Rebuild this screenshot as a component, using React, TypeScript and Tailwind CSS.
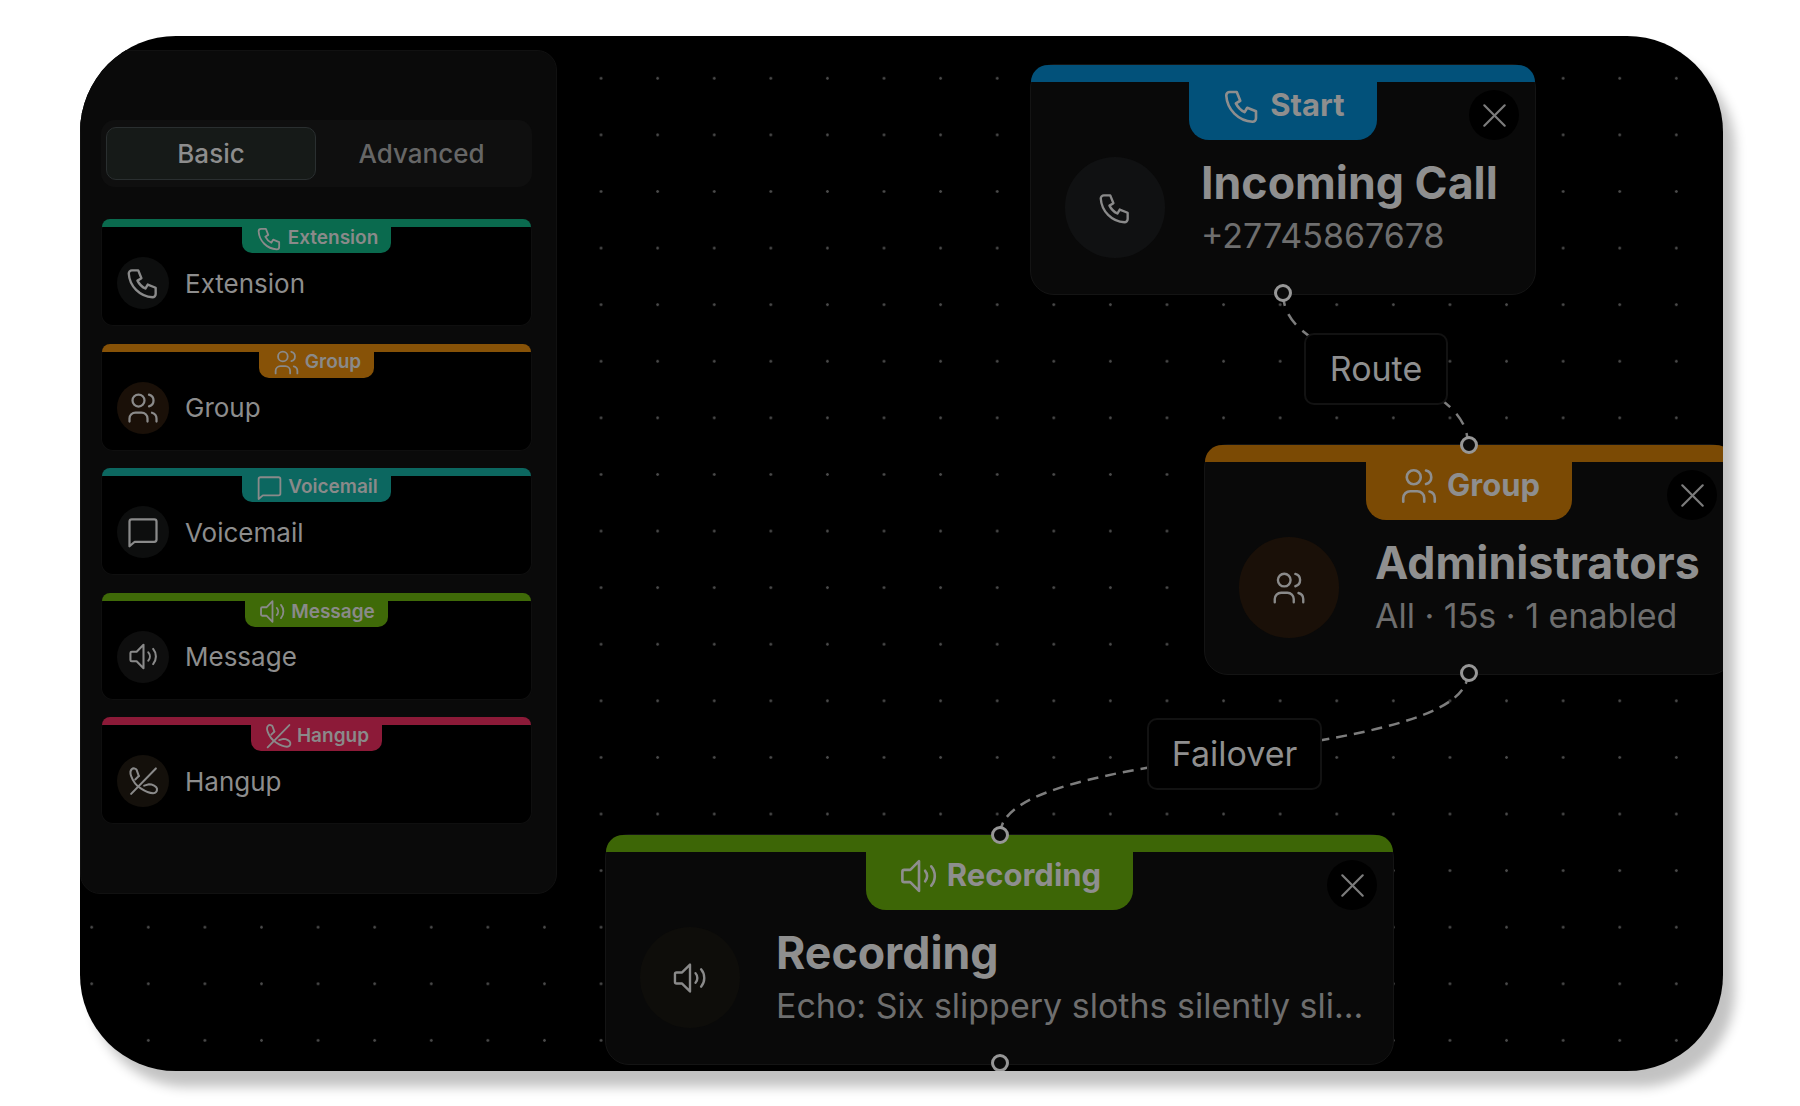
import React from 'react';

type IconProps = { size: number; className?: string };

const Svg = ({ size, className, children }: IconProps & { children: React.ReactNode }) => (
  <svg
    width={size}
    height={size}
    viewBox="0 0 24 24"
    fill="none"
    stroke="currentColor"
    strokeWidth={1.5}
    strokeLinecap="round"
    strokeLinejoin="round"
    className={`shrink-0 overflow-visible ${className ?? ''}`}
  >
    {children}
  </svg>
);

const PhoneIcon = (p: IconProps) => (
  <Svg {...p}>
    <path d="M5 4h4l2 5l-2.5 1.5a11 11 0 0 0 5 5l1.5 -2.5l5 2v4a2 2 0 0 1 -2 2a16 16 0 0 1 -15 -15a2 2 0 0 1 2 -2" />
  </Svg>
);

const UsersIcon = (p: IconProps) => (
  <Svg {...p}>
    <path d="M9 7m-4 0a4 4 0 1 0 8 0a4 4 0 1 0 -8 0" />
    <path d="M3 21v-2a4 4 0 0 1 4 -4h4a4 4 0 0 1 4 4v2" />
    <path d="M16 3.13a4 4 0 0 1 0 7.75" />
    <path d="M21 21v-2a4 4 0 0 0 -3 -3.85" />
  </Svg>
);

const MessageIcon = (p: IconProps) => (
  <Svg {...p}>
    <path d="M3 5a1.5 1.5 0 0 1 1.5 -1.5h15a1.5 1.5 0 0 1 1.5 1.5v12a1.5 1.5 0 0 1 -1.5 1.5h-13l-3.5 3z" />
  </Svg>
);

const SpeakerIcon = (p: IconProps) => (
  <Svg {...p}>
    <path d="M3.5 8.5h3.5l5 -5v17l-5 -5h-3.5a1 1 0 0 1 -1 -1v-5a1 1 0 0 1 1 -1z" />
    <path d="M15.5 9a4.5 4.5 0 0 1 0 6" />
    <path d="M19 6.5a8.5 8.5 0 0 1 0 11" />
  </Svg>
);

const HangupIcon = (p: IconProps) => (
  <Svg {...p}>
    <path d="M21 2.5L3 21" />
    <path d="M8.6 8L7 3.5C6.5 2.5 4.5 2 3.5 3C2.2 4.2 2.3 6 3 8C4.2 11.5 6.8 15 10 17C13 19 16.5 20.5 19 20.5C21 20.5 22 19.2 21.8 17.2C21.6 15.6 18.5 14 16 14L12.5 15" />
    <path d="M8.6 8L6 10.5" />
  </Svg>
);

const XIcon = (p: IconProps) => (
  <Svg {...p}>
    <path d="M5 5L19 19" />
    <path d="M19 5L5 19" />
  </Svg>
);

const items = [
  { label: 'Extension', Icon: PhoneIcon, bar: 'bg-[#0a6a4e]', avatar: 'bg-[#0d0e0e]', iconSize: 38 },
  { label: 'Group', Icon: UsersIcon, bar: 'bg-[#875207]', avatar: 'bg-[#1a1008]', iconSize: 36 },
  { label: 'Voicemail', Icon: MessageIcon, bar: 'bg-[#0c6760]', avatar: 'bg-[#0d0e0e]', iconSize: 36 },
  { label: 'Message', Icon: SpeakerIcon, bar: 'bg-[#3f6a08]', avatar: 'bg-[#0e0e0e]', iconSize: 33 },
  { label: 'Hangup', Icon: HangupIcon, bar: 'bg-[#8c1a38]', avatar: 'bg-[#14100b]', iconSize: 33 },
];

const Sidebar = () => (
  <aside className="ml-0 mt-[14px] h-[844px] w-[477px] rounded-[20px] border border-[#111111] bg-[#0a0a0a] pl-[20px] pr-[24px] pt-[69px]">
    <div className="flex h-[67px] items-center rounded-[14px] bg-[#0f0f0f] px-[5px]">
      <div className="flex h-[53px] w-[210px] items-center justify-center rounded-[10px] border border-[#2a2f30] bg-[#161a18] text-[26px] font-medium text-[#8d8d8d]">
        Basic
      </div>
      <div className="flex h-[53px] flex-1 items-center justify-center text-[26px] font-medium text-[#666666]">
        Advanced
      </div>
    </div>
    <div className="mt-[32px] flex flex-col gap-[17.6px]">
      {items.map(({ label, Icon, bar, avatar, iconSize }) => (
        <div key={label} className="h-[107px] rounded-[12px] border-x border-b border-[#0f0f0f] bg-black">
          <div className={`h-[8px] rounded-t-[8px] ${bar}`} />
          <div className={`mx-auto -mt-[4px] flex h-[30px] w-fit items-center gap-[4px] rounded-b-[10px] px-[13px] text-[19px] font-semibold text-[#8a8a8a] ${bar}`}>
            <Icon size={29} />
            {label}
          </div>
          <div className="mt-[4px] flex items-center gap-[16px] pl-[15px]">
            <div className={`flex h-[52px] w-[52px] items-center justify-center rounded-full text-[#8a8a8a] ${avatar}`}>
              <Icon size={iconSize} />
            </div>
            <span className="text-[26px] text-[#8d8d8d]">{label}</span>
          </div>
        </div>
      ))}
    </div>
  </aside>
);

type FlowNodeProps = {
  className: string;
  Icon: (p: IconProps) => React.ReactElement;
  badge: string;
  title: string;
  subtitle: string;
  color: string;
  avatar: string;
  topHandle?: boolean;
};

const Handle = ({ className }: { className: string }) => (
  <div className={`absolute left-1/2 h-[18px] w-[18px] -translate-x-1/2 rounded-full border-[3px] border-[#979797] bg-[#0a0a0a] ${className}`} />
);

const FlowNode = ({ className, Icon, badge, title, subtitle, color, avatar, topHandle }: FlowNodeProps) => (
  <div className={`absolute h-[231px] rounded-[24px] border border-[#141414] bg-[#090909] ${className}`}>
    <div className={`h-[17px] rounded-t-[23px] ${color}`} />
    <div className={`mx-auto -mt-[7px] flex h-[65px] w-fit items-center gap-[7px] rounded-b-[20px] px-[32px] pb-[4px] text-[31px] font-bold text-[#8e8e8e] ${color}`}>
      <Icon size={42} />
      {badge}
    </div>
    <div className="mt-[17px] flex items-center gap-[36px] pl-[34px]">
      <div className={`flex h-[101px] w-[100px] shrink-0 items-center justify-center rounded-full text-[#8a8a8a] ${avatar}`}>
        <Icon size={38} />
      </div>
      <div className="-mt-[3px] min-w-0">
        <div className="whitespace-nowrap text-[44.7px] font-bold leading-[54px] text-[#8f8f8f]">{title}</div>
        <div className="mt-[5px] whitespace-nowrap text-[34px] leading-[42px] text-[#6e6e6e]">{subtitle}</div>
      </div>
    </div>
    <div className="absolute right-[16px] top-[25px] flex h-[50px] w-[50px] items-center justify-center rounded-full bg-black text-[#7c7c7c]">
      <XIcon size={35} />
    </div>
    {topHandle && <Handle className="-top-[9px]" />}
    <Handle className="-bottom-[8px]" />
  </div>
);

const EdgeLabel = ({ className, children }: { className: string; children: React.ReactNode }) => (
  <div className={`absolute flex h-[72px] items-center justify-center rounded-[10px] border-2 border-[#121212] bg-black pb-[2px] text-[34px] text-[#8f8f8f] ${className}`}>
    {children}
  </div>
);

export default function App() {
  return (
    <div className="h-[1106px] w-[1800px] overflow-hidden bg-white pl-[80px] pt-[36px] font-['Inter',sans-serif]">
      <div className="relative h-[1035px] w-[1643px] overflow-hidden rounded-[96px] bg-black bg-[radial-gradient(circle,#4a4a4a_1.1px,transparent_1.6px)] bg-[length:56.6px_56.6px] bg-[position:-16.6px_14px] shadow-[12px_16px_12px_rgba(0,0,0,0.24)]">
        <svg className="absolute inset-0" width={1643} height={1035} viewBox="80 36 1643 1035" fill="none">
          <path d="M1283 293C1283 370 1468 365 1468 445" stroke="#7d7d7d" strokeWidth={2.5} strokeDasharray="13 9" />
          <path d="M1468 673C1468 765 1000 743 1000 835" stroke="#7d7d7d" strokeWidth={2.5} strokeDasharray="11 7" />
        </svg>
        <Sidebar />
        <FlowNode
          className="left-[950px] top-[28px] w-[506px]"
          Icon={PhoneIcon}
          badge="Start"
          title="Incoming Call"
          subtitle="+27745867678"
          color="bg-[#02517a]"
          avatar="bg-[#101112]"
        />
        <FlowNode
          className="left-[1124px] top-[408px] w-[530px]"
          Icon={UsersIcon}
          badge="Group"
          title="Administrators"
          subtitle="All · 15s · 1 enabled"
          color="bg-[#7b4a04]"
          avatar="bg-[#1a1008]"
          topHandle
        />
        <FlowNode
          className="left-[525px] top-[798px] w-[789px]"
          Icon={SpeakerIcon}
          badge="Recording"
          title="Recording"
          subtitle="Echo: Six slippery sloths silently sli..."
          color="bg-[#3d6606]"
          avatar="bg-[#0e0d0a]"
          topHandle
        />
        <EdgeLabel className="left-[1224px] top-[297px] w-[144px]">Route</EdgeLabel>
        <EdgeLabel className="left-[1067px] top-[682px] w-[175px]">Failover</EdgeLabel>
      </div>
    </div>
  );
}
